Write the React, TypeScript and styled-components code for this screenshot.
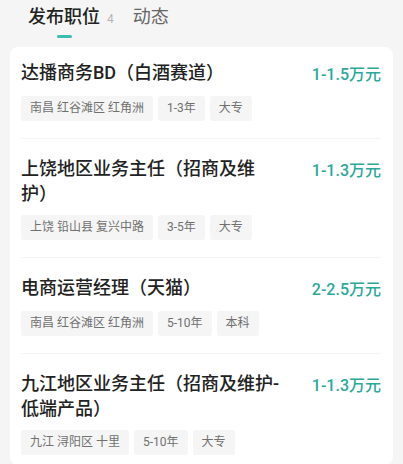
import React from "react";
import styled, { createGlobalStyle } from "styled-components";

const GlobalStyle = createGlobalStyle`
  html, body {
    margin: 0;
    padding: 0;
    background: #f5f5f5;
    font-family: Roboto, "Noto Sans CJK SC", "Noto Sans", sans-serif;
    text-spacing-trim: space-all;
  }
  * { box-sizing: border-box; }
`;

const Page = styled.div`
  width: 403px;
  min-height: 464px;
  background: #f5f5f5;
  overflow: hidden;
`;

const TabBar = styled.div`
  display: flex;
  align-items: baseline;
  padding: 4px 0 0 28px;
  height: 47px;
`;

const Tab = styled.div`
  display: flex;
  flex-direction: column;
  align-items: center;
`;

const TabLabel = styled.span<{ $active?: boolean }>`
  font-size: 18px;
  line-height: 26px;
  font-weight: ${(p) => (p.$active ? 500 : 400)};
  color: ${(p) => (p.$active ? "#222" : "#666")};
`;

const Indicator = styled.span<{ $active?: boolean }>`
  width: 15px;
  height: 3px;
  margin-top: 5px;
  border-radius: 2px;
  background: ${(p) => (p.$active ? "#3cbcb0" : "transparent")};
`;

const Count = styled.span`
  font-size: 12px;
  color: #b5b5b5;
  margin: 0 19px 0 7px;
`;

const Card = styled.div`
  margin: 0 10px;
  background: #fff;
  border-radius: 8px;
  padding: 0 12px 0 11px;
`;

const Item = styled.div`
  padding: 17px 0 17px;
  text-spacing-trim: space-all;
  & + & {
    border-top: 1px solid #f4f4f4;
  }
  &:first-child {
    padding-top: 13px;
  }
  &:last-child {
    padding-bottom: 10px;
  }
`;

const TitleRow = styled.div`
  display: flex;
  align-items: flex-start;
  gap: 24px;
`;

const Title = styled.div`
  flex: 1;
  min-width: 0;
  font-size: 18px;
  line-height: 25px;
  font-weight: 500;
  color: #222;
  text-spacing-trim: space-all;
`;

const Salary = styled.div`
  font-size: 16px;
  line-height: 25px;
  padding-top: 2px;
  font-weight: 500;
  color: #2ea79b;
  white-space: nowrap;
`;

const TagList = styled.div`
  display: flex;
  gap: 5px;
  margin-top: 9px;
`;

const Tag = styled.span`
  height: 25px;
  line-height: 25px;
  padding: 0 9px;
  font-size: 12px;
  color: #707070;
  background: #f5f5f5;
  border-radius: 3px;
  white-space: pre;
`;

const jobs = [
  { title: "达播商务BD（白酒赛道）", salary: "1-1.5万元", tags: ["南昌 红谷滩区 红角洲", "1-3年", "大专"] },
  { title: "上饶地区业务主任（招商及维护）", salary: "1-1.3万元", tags: ["上饶 铅山县 复兴中路", "3-5年", "大专"] },
  { title: "电商运营经理（天猫）", salary: "2-2.5万元", tags: ["南昌 红谷滩区 红角洲", "5-10年", "本科"] },
  { title: "九江地区业务主任（招商及维护-低端产品）", salary: "1-1.3万元", tags: ["九江 浔阳区 十里", "5-10年", "大专"] },
];

export default function App() {
  return (
    <Page>
      <GlobalStyle />
      <TabBar>
        <Tab>
          <TabLabel $active>发布职位</TabLabel>
          <Indicator $active />
        </Tab>
        <Count>4</Count>
        <Tab>
          <TabLabel>动态</TabLabel>
          <Indicator />
        </Tab>
      </TabBar>
      <Card>
        {jobs.map((job) => (
          <Item key={job.title}>
            <TitleRow>
              <Title>{job.title}</Title>
              <Salary>{job.salary}</Salary>
            </TitleRow>
            <TagList>
              {job.tags.map((t) => (
                <Tag key={t}>{t}</Tag>
              ))}
            </TagList>
          </Item>
        ))}
      </Card>
    </Page>
  );
}
